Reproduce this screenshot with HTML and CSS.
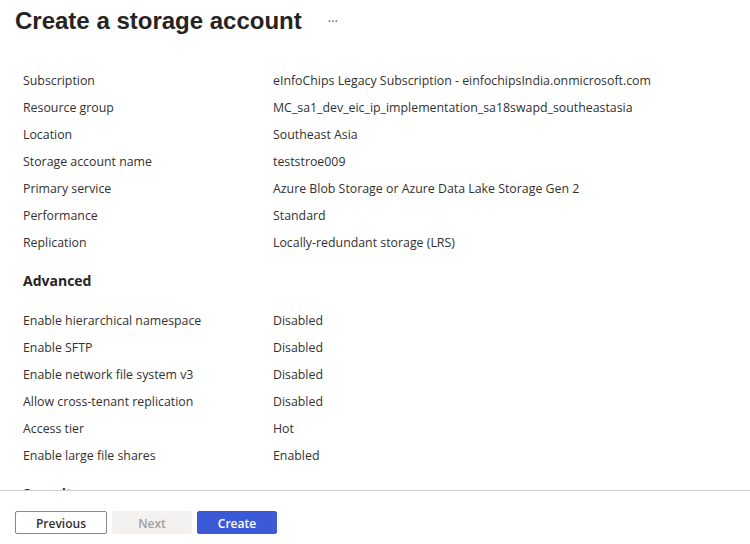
FILE: index.html
```html
<!DOCTYPE html>
<html>
<head>
<meta charset="utf-8">
<link rel="stylesheet" href="styles.css">
</head>
<body>
<div class="page">
  <header class="header">
    <h1 class="title">Create a storage account</h1>
    <span class="more">···</span>
  </header>
  <main class="content">
    <section class="group">
      <div class="row"><span class="label">Subscription</span><span class="value">eInfoChips Legacy Subscription - einfochipsIndia.onmicrosoft.com</span></div>
      <div class="row"><span class="label">Resource group</span><span class="value">MC_sa1_dev_eic_ip_implementation_sa18swapd_southeastasia</span></div>
      <div class="row"><span class="label">Location</span><span class="value">Southeast Asia</span></div>
      <div class="row"><span class="label">Storage account name</span><span class="value">teststroe009</span></div>
      <div class="row"><span class="label">Primary service</span><span class="value">Azure Blob Storage or Azure Data Lake Storage Gen 2</span></div>
      <div class="row"><span class="label">Performance</span><span class="value">Standard</span></div>
      <div class="row"><span class="label">Replication</span><span class="value">Locally-redundant storage (LRS)</span></div>
    </section>
    <h2 class="section-title">Advanced</h2>
    <section class="group">
      <div class="row"><span class="label">Enable hierarchical namespace</span><span class="value">Disabled</span></div>
      <div class="row"><span class="label">Enable SFTP</span><span class="value">Disabled</span></div>
      <div class="row"><span class="label">Enable network file system v3</span><span class="value">Disabled</span></div>
      <div class="row"><span class="label">Allow cross-tenant replication</span><span class="value">Disabled</span></div>
      <div class="row"><span class="label">Access tier</span><span class="value">Hot</span></div>
      <div class="row"><span class="label">Enable large file shares</span><span class="value">Enabled</span></div>
    </section>
    <h2 class="section-title">Security</h2>
  </main>
  <footer class="footer">
    <button class="btn btn-secondary">Previous</button>
    <button class="btn btn-disabled" disabled>Next</button>
    <button class="btn btn-primary">Create</button>
  </footer>
</div>
</body>
</html>
```
FILE: styles.css
```css
* { box-sizing: border-box; }
html, body { margin: 0; padding: 0; background: #fff; }
body {
  font-family: "Open Sans", "Noto Sans", sans-serif;
  color: #323130;
  width: 750px;
  height: 544px;
  overflow: hidden;
}
.page { display: flex; flex-direction: column; height: 544px; }
.header {
  display: flex;
  gap: 26px;
  padding: 6px 15px 0 15px;
  height: 60px;
  flex: none;
  align-items: flex-start;
}
.title {
  margin: 0;
  font-family: "Liberation Sans", Arial, sans-serif;
  font-weight: 700;
  font-size: 24px;
  line-height: 30px;
  color: #252423;
}
.more {
  font-size: 13px;
  color: #605e5c;
  line-height: 30px;
}
.content {
  flex: 1;
  overflow: hidden;
  padding: 7px 23px 0 23px;
}
.group { display: flex; flex-direction: column; }
.row {
  display: flex;
  height: 27px;
  align-items: center;
  font-size: 12.35px;
  line-height: 16px;
}
.label { width: 250px; flex: none; }
.value { flex: 1; }
.section-title {
  margin: 0;
  font-size: 14px;
  font-weight: 700;
  line-height: 20px;
  padding: 15px 0 16px 0;
  color: #252423;
}
.footer {
  flex: none;
  height: 54px;
  border-top: 1px solid #d2d0ce;
  display: flex;
  align-items: flex-start;
  gap: 5px;
  padding: 20px 15px 0 15px;
}
.btn {
  font-family: "Open Sans", "Noto Sans", sans-serif;
  font-size: 12px;
  font-weight: 600;
  height: 23px;
  border-radius: 2px;
  padding: 3px 0 0 0;
  line-height: 18px;
  border: 1px solid transparent;
}
.btn-secondary { width: 92px; background: #fff; border-color: #8a8886; color: #323130; }
.btn-disabled { width: 80px; background: #f3f2f1; border-color: #f3f2f1; color: #a19f9d; }
.btn-primary { width: 80px; background: #3b5ad8; border-color: #3b5ad8; color: #fff; }
```
